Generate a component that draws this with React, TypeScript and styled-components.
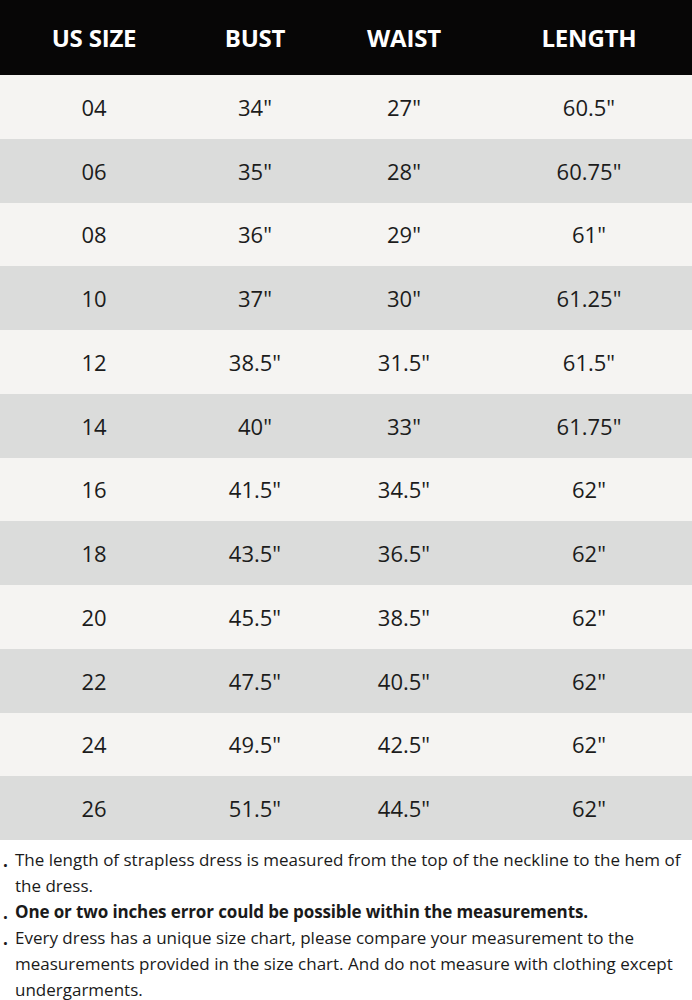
import React from "react";
import styled, { createGlobalStyle } from "styled-components";

const GlobalStyle = createGlobalStyle`
  html, body {
    margin: 0;
    padding: 0;
    background: #ffffff;
  }
  body {
    font-family: "Open Sans", "Noto Sans", sans-serif;
    color: #1a1a1a;
  }
`;

const Page = styled.div`
  width: 692px;
`;

const Row = styled.div<{ $tone: "head" | "light" | "dark" }>`
  display: grid;
  grid-template-columns: 188px 134px 164px 206px;
  align-items: center;
  height: ${(p) => (p.$tone === "head" ? "75px" : "63.75px")};
  background: ${(p) =>
    p.$tone === "head" ? "#070606" : p.$tone === "light" ? "#f5f4f2" : "#dbdcdb"};
`;

const HeadCell = styled.div`
  text-align: center;
  color: #ffffff;
  font-weight: 700;
  font-size: 24px;
  letter-spacing: -0.2px;
`;

const Cell = styled.div`
  text-align: center;
  font-size: 22px;
  color: #1c1c1c;
`;

const Notes = styled.ul`
  list-style: none;
  margin: 0;
  padding: 7px 4px 0 15px;
  font-size: 17px;
  line-height: 26px;
  color: #1a1a1a;
`;

const Note = styled.li<{ $bold?: boolean }>`
  position: relative;
  font-weight: ${(p) => (p.$bold ? 700 : 400)};
  letter-spacing: ${(p) => (p.$bold ? "-0.12px" : "0")};

  &::before {
    content: ".";
    position: absolute;
    left: -12px;
    top: 1px;
    font-weight: 700;
  }
`;

const rows = [
  ["04", '34"', '27"', '60.5"'],
  ["06", '35"', '28"', '60.75"'],
  ["08", '36"', '29"', '61"'],
  ["10", '37"', '30"', '61.25"'],
  ["12", '38.5"', '31.5"', '61.5"'],
  ["14", '40"', '33"', '61.75"'],
  ["16", '41.5"', '34.5"', '62"'],
  ["18", '43.5"', '36.5"', '62"'],
  ["20", '45.5"', '38.5"', '62"'],
  ["22", '47.5"', '40.5"', '62"'],
  ["24", '49.5"', '42.5"', '62"'],
  ["26", '51.5"', '44.5"', '62"'],
];

const App: React.FC = () => {
  return (
    <Page>
      <GlobalStyle />
      <Row $tone="head">
        <HeadCell>US SIZE</HeadCell>
        <HeadCell>BUST</HeadCell>
        <HeadCell>WAIST</HeadCell>
        <HeadCell>LENGTH</HeadCell>
      </Row>
      {rows.map((r, i) => (
        <Row key={r[0]} $tone={i % 2 === 0 ? "light" : "dark"}>
          {r.map((v, j) => (
            <Cell key={j}>{v}</Cell>
          ))}
        </Row>
      ))}
      <Notes>
        <Note>
          The length of strapless dress is measured from the top of the neckline to the hem of
          the dress.
        </Note>
        <Note $bold>One or two inches error could be possible within the measurements.</Note>
        <Note>
          Every dress has a unique size chart, please compare your measurement to the
          measurements provided in the size chart. And do not measure with clothing except
          undergarments.
        </Note>
      </Notes>
    </Page>
  );
};

export default App;
